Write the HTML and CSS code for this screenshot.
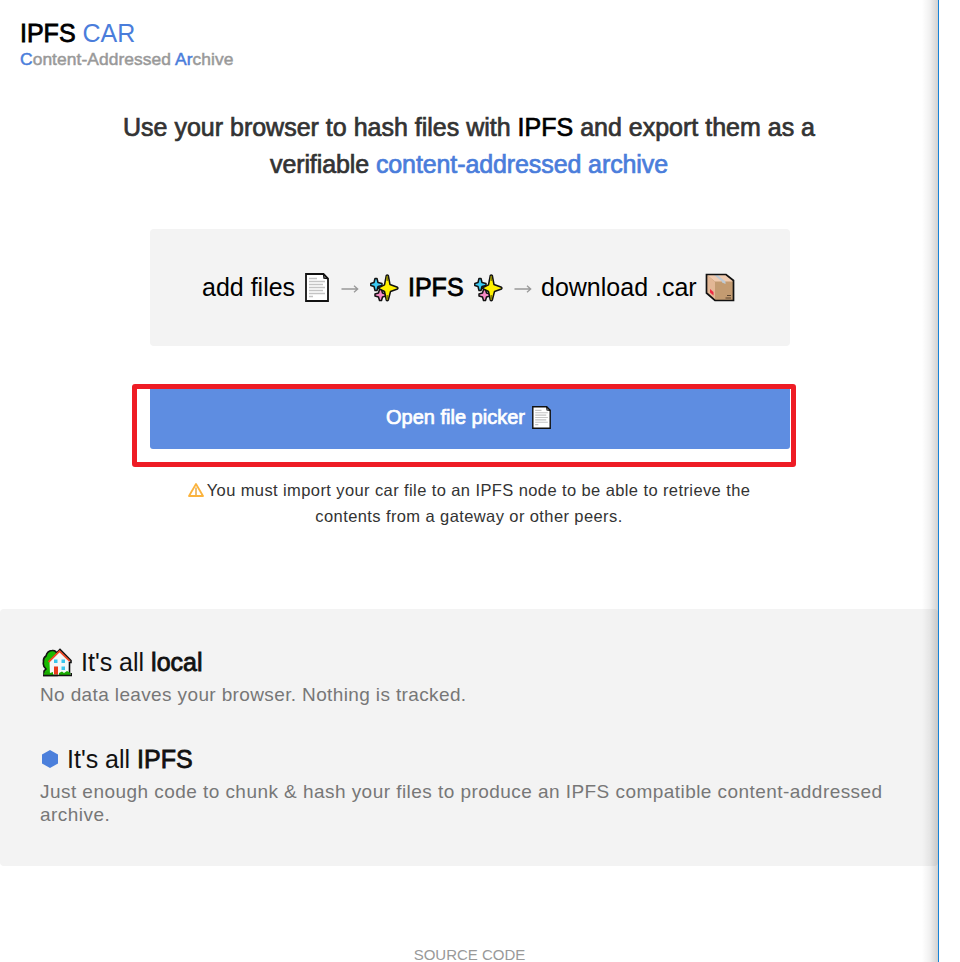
FILE: index.html
```html
<!DOCTYPE html>
<html lang="en">
<head>
<meta charset="utf-8">
<title>IPFS CAR</title>
<link rel="stylesheet" href="styles.css">
</head>
<body>
<svg class="defs" width="0" height="0">
  <symbol id="doc" viewBox="0 0 24 29">
    <path d="M1 1H18.5L23 5.5V28H1Z" fill="#fff" stroke="#111" stroke-width="1.8"/>
    <path d="M18.500 1L19 5L23 5.500" fill="none" stroke="#111" stroke-width="1.4"/>
    <path d="M4 5.5H12M4 8.5H20M4 11.5H18M4 14.5H20M4 17.5H18M4 20.5H20M4 23.5H8" stroke="#c4c4c4" stroke-width="1.3"/>
  </symbol>
  <symbol id="arrow" viewBox="0 0 18 10">
    <path d="M.5 5H16.5M13 1.8L16.7 5L13 8.2" fill="none" stroke="#999" stroke-width="1.3"/>
  </symbol>
  <symbol id="sparkles" viewBox="0 0 29 28">
    <g stroke="#111" stroke-width="1.5" stroke-linejoin="round">
      <path d="M5 4.500H7L8 8.500L12 9.500V11.500L8 12.500L7 16.500H5L4 12.500L.8 11.500V9.500L4 8.500Z" fill="#3ccbf4"/>
      <path d="M9.500 15.500H11.500L12.500 19L16 20V22L12.500 23L11.500 26.500H9.500L8.500 23L5 22V20L8.500 19Z" fill="#f78bc5"/>
      <path d="M16.3 1.5Q17.2 .4 18.3 1.5L20 10.5L27.5 13.2Q28.4 14 27.5 15L20.500 17.5L18.3 26Q17.2 27.5 16.3 26L14.500 17.5L8 14.2L14.500 10.8Z" fill="#fff100"/>
    </g>
    <path d="M17.3 2V7M17.3 21V26" stroke="#8d8600" stroke-width="1.5"/>
  </symbol>
  <symbol id="package" viewBox="0 0 30 29">
    <path d="M1.500 1.500H21L28.500 7.500V27.500H10L1.500 20Z" fill="#c39b71"/>
    <path d="M1.500 1.500H21L28.500 8.500H10Z" fill="#f0cbb0"/>
    <path d="M1.500 1.500L10 8.700V27.500L1.500 20Z" fill="#e3b795"/>
    <path d="M9 2H12.500L20.500 8.500V11L17 9.500V8.500Z" fill="#bfc9d2"/>
    <path d="M5 16L8.500 19V22.500L5 19.500Z" fill="#ef2b43"/>
    <path d="M22 22.500H26M20.500 25H26" stroke="#5c4631"/>
    <path d="M1.500 1.500H21L28.500 7.500V27.500H10L1.500 20Z" fill="none" stroke="#111" stroke-width="1.7"/>
  </symbol>
  <symbol id="house" viewBox="0 0 30 29">
    <path d="M2 27.500V23L4 21Q.5 18 1.500 14Q1 10 4 8Q5 3 10 2.500Q14 2 15 6V27.500Z" fill="#19b900" stroke="#111" stroke-width="1.6"/>
    <path d="M7.500 13.500L18 1.500L29 12.500V14.500H27.500V26.500H8Z" fill="#f4f8f8"/>
    <path d="M15 4.500L18 1.500L29 12.500V14.500H27.500V26" fill="none" stroke="#111" stroke-width="1.6"/>
    <path d="M6.500 14L17.500 3.200L27.800 13.200" fill="none" stroke="#ef4723" stroke-width="1.8"/>
    <path d="M12 11.500H15.500V15H12ZM19.500 11.500H23V15H19.500ZM19.500 18.500H23V22H19.500Z" fill="#39c7ee"/>
    <path d="M12 18.500H16V26.500H12Z" fill="#e83a1c"/>
    <path d="M2 25L5 23L8 25L11 24V27H2ZM17 25L20 23.500L22 25L25 23L28.500 25V27H17Z" fill="#19a900"/>
    <path d="M1 27.500H29.500V25" fill="none" stroke="#111" stroke-width="1.6"/>
  </symbol>
</svg>
<div class="page">
  <header class="brand">
    <div class="logo"><b>IPFS</b> <span class="blue">CAR</span></div>
    <div class="tagline"><span class="blue">C</span>ontent-Addressed <span class="blue">Ar</span>chive</div>
  </header>
  <main>
    <h1>Use your browser to hash files with <span class="black">IPFS</span> and export them as a<br><span class="second">verifiable <span class="blue">content-addressed archive</span></span></h1>
    <section class="flow">
      <span class="add">add files</span>
      <svg class="doc"><use href="#doc"/></svg>
      <svg class="arrow"><use href="#arrow"/></svg>
      <svg class="sparkles"><use href="#sparkles"/></svg>
      <b class="ipfs">IPFS</b>
      <svg class="sparkles"><use href="#sparkles"/></svg>
      <svg class="arrow"><use href="#arrow"/></svg>
      <span class="download">download .car</span>
      <svg class="package"><use href="#package"/></svg>
    </section>
    <div class="picker">
      <button type="button">Open file picker<svg class="doc-small"><use href="#doc"/></svg></button>
      <div class="highlight"></div>
    </div>
    <p class="note"><svg class="warn" viewBox="0 0 16 14"><path d="M8 1L15 13H1Z" fill="none" stroke="#fbb33d" stroke-width="1.8" stroke-linejoin="round"/><path d="M8 4.500V12" stroke="#e9ae50" stroke-width="1.6"/></svg>You must import your car file to an IPFS node to be able to retrieve the<br>contents from a gateway or other peers.</p>
  </main>
  <section class="features">
    <h2><svg class="house"><use href="#house"/></svg>It's all&nbsp;<b>local</b></h2>
    <p class="short">No data leaves your browser. Nothing is tracked.</p>
    <h2><svg class="hex" viewBox="0 0 16 18"><path d="M8 0L16 4.500V13.500L8 18L0 13.500V4.500Z" fill="#4b7fdb"/></svg>It's all&nbsp;<b>IPFS</b></h2>
    <p>Just enough code to chunk &amp; hash your files to produce an IPFS compatible content-addressed<br>archive.</p>
  </section>
  <footer>SOURCE CODE</footer>
  <div class="edge"></div>
</div>
</body>
</html>
```
FILE: styles.css
```css
* { box-sizing: border-box; }
body {
  margin: 0;
  background: #fff;
  color: #111;
  font-family: "Liberation Sans", Arial, sans-serif;
  overflow: hidden;
}
.defs { position: absolute; }
.page {
  position: relative;
  width: 939px;
  height: 962px;
  border-right: 1px solid #1683d8;
  overflow: hidden;
}
.edge {
  position: absolute;
  top: 0;
  right: 0;
  width: 16px;
  height: 100%;
  background: linear-gradient(to right, rgba(0,0,0,0), rgba(0,0,0,.06) 50%, rgba(0,0,0,.18));
}
h1, h2, p { margin: 0; font-weight: 400; }
b { font-weight: 400; -webkit-text-stroke: .8px currentColor; }
.blue { color: #4a7ddb; }
.black { color: #000; }
.brand { padding: 18px 20px 0; height: 109px; }
.logo { font-size: 25px; line-height: 30px; }
.logo b { color: #000; }
.tagline {
  font-size: 17.4px;
  letter-spacing: .07px;
  line-height: 22px;
  color: #999;
  -webkit-text-stroke: .5px currentColor;
}
h1 {
  font-size: 25px;
  line-height: 37px;
  text-align: center;
  color: #333;
  white-space: nowrap;
  -webkit-text-stroke: .7px currentColor;
}
.second { letter-spacing: -.1px; }
.flow {
  display: flex;
  align-items: center;
  width: 640px;
  height: 117px;
  margin: 46px auto 0 150px;
  padding-left: 52px;
  border-radius: 4px;
  background: #f3f3f3;
  color: #000;
  font-size: 25px;
  white-space: nowrap;
}
.flow svg { flex: none; }
.add { width: 103px; }
.ipfs { width: 66px; }
.download { width: 164px; }
.doc { width: 24px; height: 29px; margin-right: 12px; }
.arrow { width: 18px; height: 10px; margin: 2px 11px 0 0; }
.sparkles { width: 29px; height: 28px; margin-right: 9px; }
.ipfs + .sparkles { margin-right: 11px; }
.sparkles + .arrow { margin-right: 9px; }
.package { width: 30px; height: 29px; }
.picker { position: relative; width: 640px; margin: 40px 0 0 150px; }
button {
  display: flex;
  align-items: center;
  justify-content: center;
  width: 640px;
  height: 63px;
  padding: 0 3px 0 0;
  border: 0;
  border-radius: 3px;
  background: #5e8de1;
  color: #fff;
  font: 20px "Liberation Sans", Arial, sans-serif;
  -webkit-text-stroke: .7px #fff;
}
.doc-small { width: 19px; height: 23px; margin-left: 7px; -webkit-text-stroke: 0; }
.highlight {
  position: absolute;
  left: -18px;
  top: -2px;
  width: 664px;
  height: 83px;
  border: 5px solid #ee1c25;
  border-radius: 3px;
}
.note {
  width: 938px;
  margin-top: 28px;
  font-size: 16.5px;
  letter-spacing: .4px;
  line-height: 26px;
  text-align: center;
  color: #333;
  white-space: nowrap;
}
.warn { width: 16px; height: 14px; margin-right: 3px; vertical-align: -1px; }
.features {
  height: 257px;
  margin-top: 80px;
  padding: 38px 40px 0;
  border-radius: 4px;
  background: #f3f3f3;
}
h2 { display: flex; align-items: center; height: 30px; font-size: 25px; }
.features p {
  height: 67px;
  padding-top: 6px;
  font-size: 19px;
  letter-spacing: .45px;
  line-height: 23px;
  color: #777;
  white-space: nowrap;
}
.features .short { letter-spacing: .37px; }
.house { width: 30px; height: 29px; margin: 0 9px 0 2px; }
.hex { width: 16px; height: 18px; margin: 0 9px 0 2px; }
footer {
  margin-top: 79px;
  padding-left: 1px;
  font-size: 15px;
  line-height: 20px;
  text-align: center;
  color: #999;
}
```
